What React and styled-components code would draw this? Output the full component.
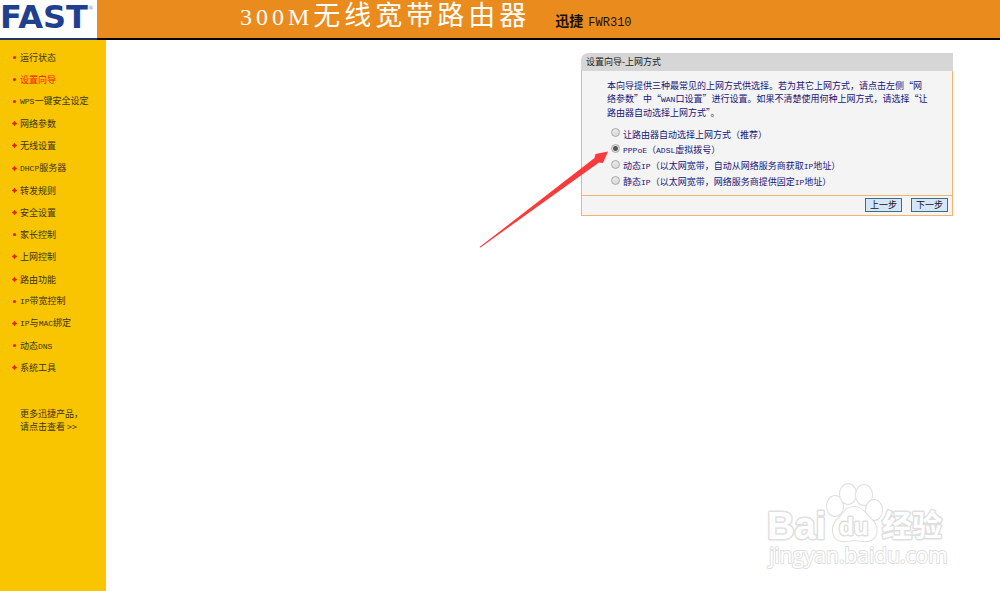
import React, { useState } from "react"
import styled, { createGlobalStyle } from "styled-components"

const GlobalStyle = createGlobalStyle`
  * {
    box-sizing: border-box;
  }
  body {
    margin: 0;
    background: #fff;
    font-family: "Noto Sans CJK SC", "Liberation Sans", sans-serif;
    font-size: 9px;
    line-height: 13px;
  }
`;

const Page = styled.div`
  display: flex;
  flex-direction: column;
  min-height: 100vh;
  position: relative;
`;

const Header = styled.header`
  display: flex;
  height: 40px;
  background: #ea8b1d;
  border-bottom: 2px solid #0a0503;
`;

const Logo = styled.div`
  flex: none;
  width: 97px;
  height: 40px;
  display: flex;
  align-items: flex-start;
  background: #fff;
  border-bottom: 2px solid #1c3768;
  color: #203f8f;
  font-family: "DejaVu Sans", sans-serif;
  font-size: 32px;
  font-weight: bold;
  line-height: 34px;

  sup {
    font-size: 6px;
    font-weight: normal;
    line-height: 16px;
    color: #7f93c0;
  }
`;

const Title = styled.h1`
  margin: 0 0 0 143px;
  color: #fff;
  font-family: "Liberation Serif", "Noto Sans CJK SC", serif;
  font-size: 27px;
  font-weight: 400;
  line-height: 32px;
  letter-spacing: 4px;
  white-space: nowrap;

  span {
    font-size: 24px;
  }
`;

const Model = styled.div`
  margin-left: 25px;
  color: #1c1206;
  font-size: 14px;
  line-height: 40px;
  white-space: nowrap;

  span {
    margin-left: 5px;
    font-family: "Liberation Mono", monospace;
    font-size: 12px;
  }
`;

const Body = styled.div`
  flex: 1;
  display: flex;
`;

const Sidebar = styled.nav`
  flex: none;
  width: 106px;
  padding: 6px 0 0 12px;
  background: #f9c400;
`;

const Menu = styled.ul`
  display: grid;
  grid-auto-rows: 1fr;
  min-height: 333px;
  margin: 0;
  padding: 0;
  list-style: none;
`;

const MenuItem = styled.li`
  display: flex;
  align-items: center;
  gap: 3px;
`;

const Mark = styled.svg`
  flex: none;
  width: 5px;
  height: 5px;
  fill: #e8200c;
`;

const MenuLink = styled.a`
  color: ${props => props.$active ? "#ff1500" : "#3c3510"};
  text-decoration: none;
  white-space: nowrap;
`;

const More = styled.a`
  display: block;
  margin: 28px 0 0 8px;
  color: #3c3510;
  text-decoration: none;
  white-space: nowrap;
`;

// half width letters inside chinese text
const En = styled.span`
  font-family: "Liberation Mono", monospace;
  font-size: 8px;
`;

const Main = styled.main`
  flex: 1;
  display: flex;
  justify-content: flex-end;
  align-items: flex-start;
  padding: 13px 47px 0 20px;
`;

const Panel = styled.form`
  position: relative;
  width: 372px;
`;

const PanelTitle = styled.h2`
  margin: 0;
  padding-left: 5px;
  background: #d6d6d6;
  border-top-left-radius: 7px;
  color: #222;
  font-size: 9px;
  font-weight: normal;
  line-height: 18px;
`;

const PanelBody = styled.div`
  padding: 8px 25px 5px;
  background: #f4f4f4;
  border: 1px solid #f5b469;
  border-top: 0;
  color: #14147a;
`;

const Intro = styled.p`
  margin: 0 0 7px;
  white-space: nowrap;
`;

const Option = styled.label`
  display: flex;
  align-items: center;
  gap: 3px;
  height: 16px;
  padding-left: 4px;
  white-space: nowrap;
`;

const Radio = styled.input`
  appearance: none;
  flex: none;
  width: 9px;
  height: 9px;
  margin: 0 0 3px;
  border: 1px solid #a9a9a9;
  border-radius: 50%;
  background: linear-gradient(#e9e9e9, #d8d8d8);

  &:checked {
    background: radial-gradient(circle, #555 0 2px, #e0e0e0 3px);
  }
`;

const PanelFooter = styled.div`
  display: flex;
  justify-content: flex-end;
  gap: 9px;
  padding: 2px 4px 3px;
  background: #f4f4f4;
  border: 1px solid #f5b469;
  border-top: 0;
`;

const Button = styled.button`
  width: 37px;
  height: 14px;
  padding: 0;
  background: #d5e6fc;
  border: 1px solid #3f6f76;
  color: #111;
  font-family: inherit;
  font-size: 9px;
  line-height: 12px;
`;

const Arrow = styled.svg`
  position: absolute;
  left: -102px;
  top: 96px;
  width: 132px;
  height: 100px;
  pointer-events: none;
`;

const Watermark = styled.svg`
  position: absolute;
  right: 46px;
  bottom: 14px;
  width: 194px;
  height: 100px;
  pointer-events: none;
`;

const menu = [
  { text: "运行状态" },
  { text: "设置向导" },
  { text: <><En>WPS</En>一键安全设定</> },
  { text: "网络参数", sub: true },
  { text: "无线设置", sub: true },
  { text: <><En>DHCP</En>服务器</>, sub: true },
  { text: "转发规则", sub: true },
  { text: "安全设置", sub: true },
  { text: "家长控制" },
  { text: "上网控制", sub: true },
  { text: "路由功能", sub: true },
  { text: <><En>IP</En>带宽控制</> },
  { text: <><En>IP</En>与<En>MAC</En>绑定</>, sub: true },
  { text: <>动态<En>DNS</En></> },
  { text: "系统工具", sub: true },
];

const options = [
  { value: "auto", text: "让路由器自动选择上网方式（推荐）" },
  { value: "pppoe", text: <><En>PPPoE</En>（<En>ADSL</En>虚拟拨号）</> },
  { value: "dynamic", text: <>动态<En>IP</En>（以太网宽带，自动从网络服务商获取<En>IP</En>地址）</> },
  { value: "static", text: <>静态<En>IP</En>（以太网宽带，网络服务商提供固定<En>IP</En>地址）</> },
];

function SideMenu() {
  const [active, setActive] = useState(1);

  return (
    <Sidebar>
      <Menu>
        {menu.map((item, i) => (
          <MenuItem key={i}>
            <Mark viewBox="0 0 5 5">
              {item.sub ? <path d="M2.500 0L3.400 1.600L5 2.500L3.400 3.400L2.500 5L1.600 3.400L0 2.500L1.600 1.600Z" stroke="#e8200c" strokeWidth="0.500" /> : <circle cx="2.500" cy="2.500" r="1.600" />}
            </Mark>
            <MenuLink href="#" $active={active === i} onClick={() => setActive(i)}>{item.text}</MenuLink>
          </MenuItem>
        ))}
      </Menu>
      <More href="#">更多迅捷产品，<br />请点击查看 &gt;&gt;</More>
    </Sidebar>
  );
}

function Wizard() {
  const [type, setType] = useState("pppoe");

  return (
    <Panel onSubmit={e => e.preventDefault()}>
      <PanelTitle>设置向导-上网方式</PanelTitle>
      <PanelBody>
        <Intro>
          本向导提供三种最常见的上网方式供选择。若为其它上网方式，请点击左侧“网<br />
          络参数”中“<En>WAN</En>口设置”进行设置。如果不清楚使用何种上网方式，请选择“让<br />
          路由器自动选择上网方式”。
        </Intro>
        {options.map(o => (
          <Option key={o.value}>
            <Radio type="radio" name="wan" value={o.value} checked={type === o.value} onChange={() => setType(o.value)} />
            <span>{o.text}</span>
          </Option>
        ))}
      </PanelBody>
      <PanelFooter>
        <Button type="button">上一步</Button>
        <Button type="submit">下一步</Button>
      </PanelFooter>
      <Arrow viewBox="0 0 132 100" fill="#fb3b3b">
        <path d="M0.500 98 L115.500 9 L116.500 5 L129 2.500 L124 14 L120 13.500 L1.500 98.500 Z" />
      </Arrow>
    </Panel>
  );
}

function Paw() {
  return (
    <Watermark viewBox="0 0 194 100" fill="#fff" stroke="#dfdfdf" strokeWidth="2" strokeLinejoin="round">
      <g fontFamily="Liberation Sans, sans-serif" style={{ paintOrder: "stroke" }}>
        <text x="7" y="62" fontSize="38" fontWeight="bold" strokeWidth="3">Bai</text>
        <ellipse cx="75" cy="29" rx="8" ry="10" />
        <ellipse cx="88" cy="17" rx="8" ry="10" />
        <ellipse cx="104" cy="18" rx="8" ry="10" />
        <ellipse cx="114" cy="33" rx="8" ry="10" />
        <path d="M94 30c-9 0-11 8-17 13-6 6-6 20 5 21 5 1 8-1 12-1s9 2 14 1c10-2 11-14 4-21-6-5-9-13-18-13z" />
        <text x="79" y="58" fontSize="24" fontWeight="bold" strokeWidth="3">du</text>
        <text x="122" y="59" fontSize="30" fontWeight="bold" fontFamily="Noto Sans CJK SC, sans-serif" strokeWidth="3">经验</text>
        <text x="9" y="86" fontSize="21" fontFamily="Open Sans, sans-serif" strokeWidth="2">jingyan.baidu.com</text>
      </g>
    </Watermark>
  );
}

export default function App() {
  return (
    <Page lang="zh-CN">
      <GlobalStyle />
      <Header>
        <Logo>FAST<sup>®</sup></Logo>
        <Title><span>300M</span>无线宽带路由器</Title>
        <Model><b>迅捷</b><span>FWR310</span></Model>
      </Header>
      <Body>
        <SideMenu />
        <Main>
          <Wizard />
        </Main>
      </Body>
      <Paw />
    </Page>
  );
}
